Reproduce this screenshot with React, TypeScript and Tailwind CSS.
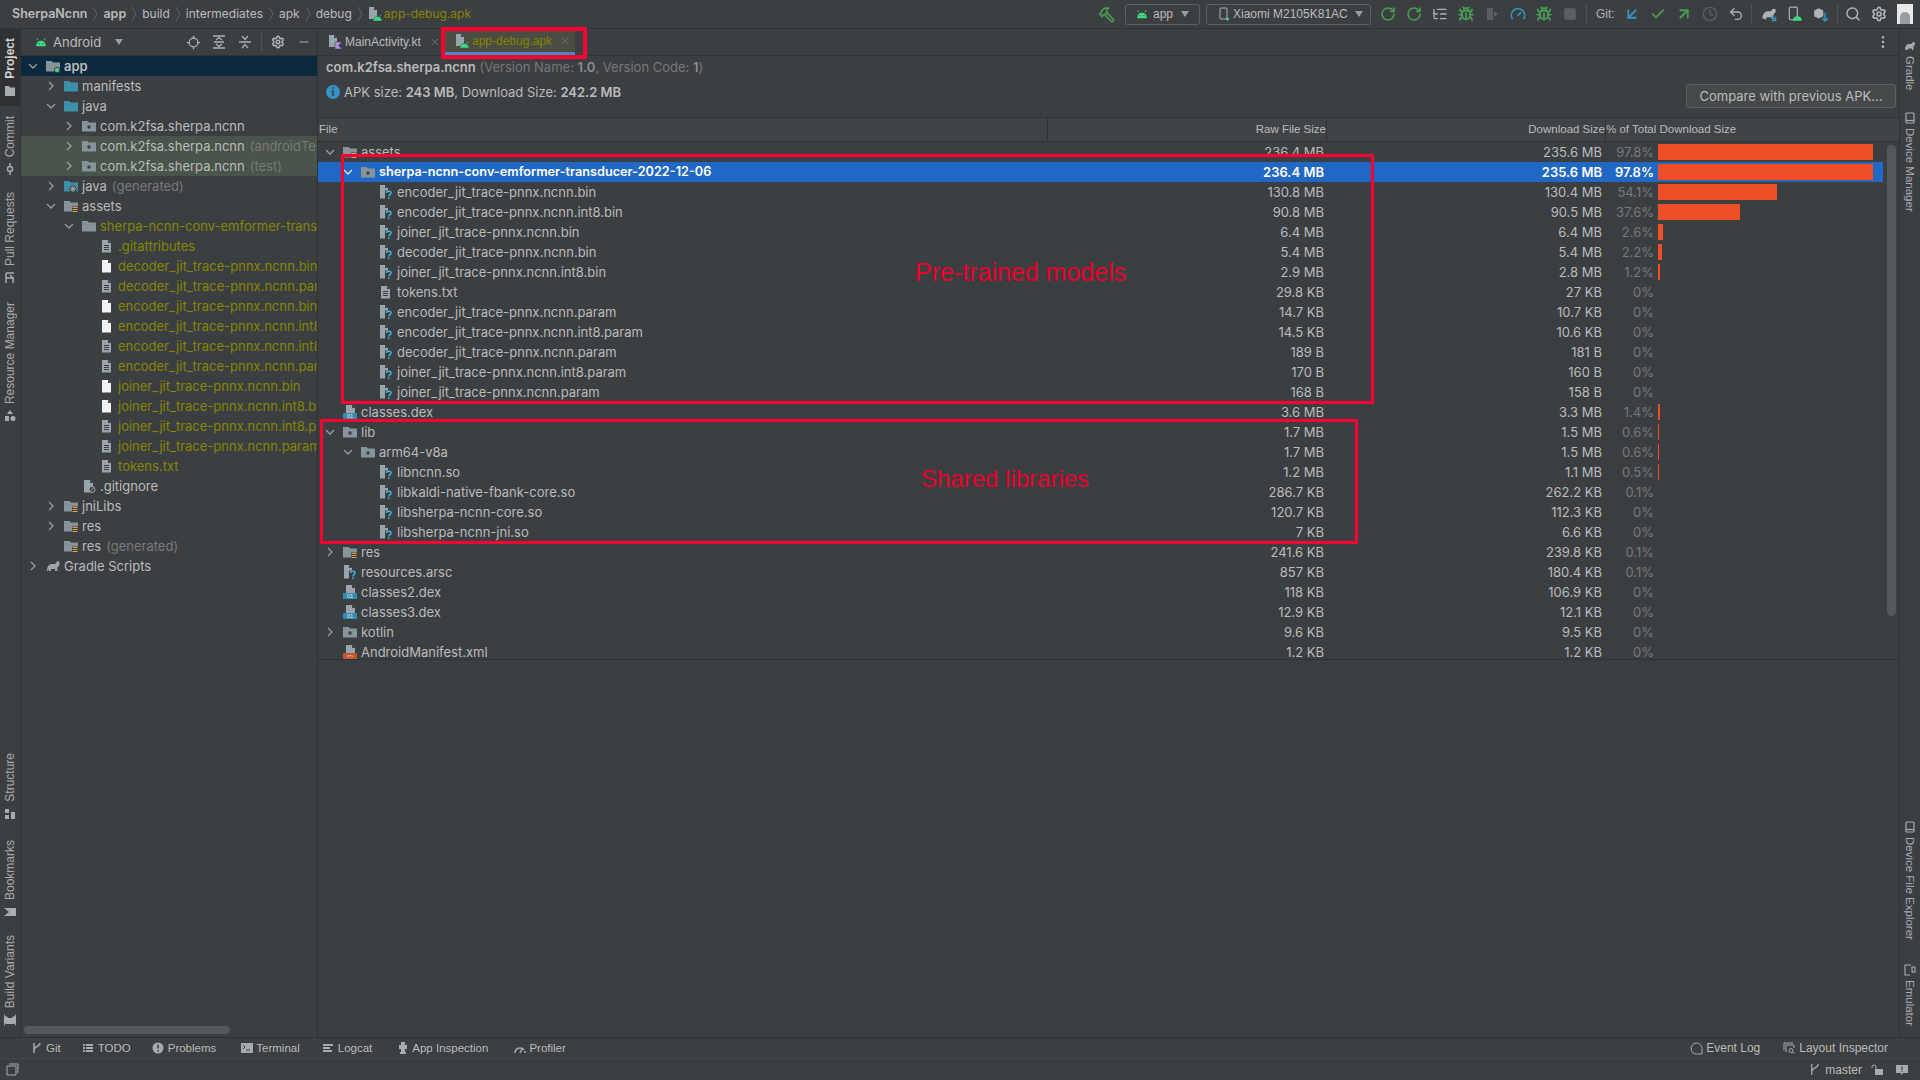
import React from "react"
import {
  ArrowDownLeft,
  ArrowUpRight,
  Bug,
  Check,
  Clock,
  Gauge,
  Hammer,
  ListTree,
  Locate,
  Minus,
  MoreVertical,
  RotateCcw,
  Search,
  Settings,
  Square,
  Undo2,
  X,
} from "lucide-react"

type IconKind =
  | "module" | "source" | "sourceGen" | "package" | "plainFolder" | "resFolder" | "gradle"
  | "textFile" | "binFile" | "ignoreFile" | "unknownFile" | "dexFile" | "xmlFile" | "kotlinFile" | "apkFile"

// depth → left padding, written out so Tailwind sees them
const indent = ["pl-[3px]", "pl-[21px]", "pl-[39px]", "pl-[57px]"]

const Chevron = ({ open, light }: { open?: boolean; light?: boolean }) => (
  <svg viewBox="0 0 12 12" className="w-3 h-3" fill="none" stroke={light ? "#e6e6e6" : "#9a9da0"} strokeWidth="1.3">
    {open ? <path d="M2 4l4 4 4-4" /> : <path d="M4 2l4 4-4 4" />}
  </svg>
)

const Android = ({ className = "w-3.5 h-3.5" }: { className?: string }) => (
  <svg viewBox="0 0 14 14" className={className} fill="#3ddc84">
    <path d="M1.5 11a5.5 5.5 0 0 1 11 0v1h-11z" />
    <path d="M3.5 5L2.2 2.6M10.5 5l1.3-2.4" stroke="#3ddc84" strokeWidth="1" />
    <circle cx="4.8" cy="9" r=".7" fill="#3c3f41" />
    <circle cx="9.2" cy="9" r=".7" fill="#3c3f41" />
  </svg>
)

const Doc = ({ fill = "#9aa4ab", lines }: { fill?: string; lines?: boolean }) => (
  <>
    <path d="M2 1h6l3 3v9.5H2z" fill={fill} />
    <path d="M8 1v3h3z" fill="#3c3f41" />
    {lines && <path d="M4 6.5h5M4 8.5h5M4 10.5h5" stroke="#3c3f41" strokeWidth="1" />}
  </>
)

function Icon({ kind }: { kind: IconKind }) {
  const folder = "M0 2h5.5l1.5 1.6h7V12.5H0z"
  return (
    <svg viewBox="0 0 14 14" className="w-3.5 h-3.5">
      {kind === "module" && (
        <>
          <path d={folder} fill="#87939a" />
          <circle cx="11" cy="11" r="2.6" fill="#3ddc84" stroke="#3c3f41" />
        </>
      )}
      {kind === "source" && <path d={folder} fill="#3d8faa" />}
      {kind === "sourceGen" && (
        <>
          <path d={folder} fill="#3d8faa" />
          <circle cx="9" cy="10" r="3.6" fill="#3c3f41" />
          <path d="M9 7v6M6 10h6M7 8l4 4M11 8l-4 4" stroke="#a9b0b5" strokeWidth="1" />
        </>
      )}
      {kind === "package" && (
        <>
          <path d={folder} fill="#87939a" />
          <circle cx="7" cy="8" r="1.7" fill="#3c3f41" />
        </>
      )}
      {kind === "plainFolder" && <path d={folder} fill="#87939a" />}
      {kind === "resFolder" && (
        <>
          <path d={folder} fill="#87939a" />
          <path d="M8 7.5h6V14H8z" fill="#3c3f41" />
          <path d="M8.5 8.5h5M8.5 10.5h5M8.5 12.5h5" stroke="#e0a050" strokeWidth="1" />
        </>
      )}
      {kind === "gradle" && (
        <path d="M1 12c0-5 2-7 5-7h3c1 0 1.500-3 3-3s1.500 2 1.500 3-1 3-2 3v4H9v-2H5v2H3l-.5-2-.5 2z" fill="#9aa4ab" />
      )}
      {kind === "textFile" && <Doc lines />}
      {kind === "binFile" && <Doc fill="#f2f2f2" />}
      {kind === "ignoreFile" && (
        <>
          <Doc />
          <circle cx="10" cy="10.500" r="3" fill="#3c3f41" stroke="#9aa4ab" />
          <path d="M8 12.500l4-4" stroke="#9aa4ab" />
        </>
      )}
      {kind === "unknownFile" && (
        <>
          <path d="M1 0h5l3 3v10.500H1z" fill="#9aa4ab" />
          <path d="M6 0v3h3z" fill="#3c3f41" />
          <path d="M6 5.500h8V14H6z" fill="#3c3f41" />
          <path d="M7.500 8c0-2.200 4.500-2.200 4.500 0 0 1.700-2.200 1.500-2.200 3.500" stroke="#3fb3d9" strokeWidth="1.500" fill="none" />
          <path d="M9 12.500h1.600V14H9z" fill="#3fb3d9" />
        </>
      )}
      {(kind === "dexFile" || kind === "xmlFile") && (
        <>
          <path d="M3 0h6l3 3v5H3z" fill="#9aa4ab" />
          <path d="M9 0v3h3z" fill="#3c3f41" />
          <path d="M0 8h14v6H0z" fill={kind === "dexFile" ? "#2f8cb0" : "#c3552d"} />
          <text x="7" y="13" textAnchor="middle" fontSize="5.500" fill="#e4e4e4" className="font-['Liberation_Sans',sans-serif]">
            {kind === "dexFile" ? "01" : "<>"}
          </text>
        </>
      )}
      {kind === "kotlinFile" && (
        <>
          <path d="M1 0h5l3 3v9H1z" fill="#9aa4ab" />
          <path d="M6 0v3h3z" fill="#3c3f41" />
          <path d="M7 7h7l-3.500 3.500L14 14H7z" fill="#b38ae0" stroke="#3c3f41" strokeWidth=".5" />
        </>
      )}
      {kind === "apkFile" && (
        <>
          <path d="M1 0h5l3 3v9H1z" fill="#9aa4ab" />
          <path d="M6 0v3h3z" fill="#3c3f41" />
          <path d="M5 14a4.500 4.500 0 0 1 9 0z" fill="#3ddc84" stroke="#3c3f41" strokeWidth=".5" />
          <path d="M7 9.500L6 8M12 9.500L13 8" stroke="#3ddc84" strokeWidth=".8" />
        </>
      )}
    </svg>
  )
}

interface TreeRow {
  depth: number
  open?: boolean
  leaf?: boolean
  icon: IconKind
  name: string
  hint?: string
  ignored?: boolean
  selected?: boolean
  tested?: boolean
  bold?: boolean
}

const sherpaFiles: [IconKind, string][] = [
  ["textFile", ".gitattributes"],
  ["binFile", "decoder_jit_trace-pnnx.ncnn.bin"],
  ["textFile", "decoder_jit_trace-pnnx.ncnn.param"],
  ["binFile", "encoder_jit_trace-pnnx.ncnn.bin"],
  ["binFile", "encoder_jit_trace-pnnx.ncnn.int8.bin"],
  ["textFile", "encoder_jit_trace-pnnx.ncnn.int8.param"],
  ["textFile", "encoder_jit_trace-pnnx.ncnn.param"],
  ["binFile", "joiner_jit_trace-pnnx.ncnn.bin"],
  ["binFile", "joiner_jit_trace-pnnx.ncnn.int8.bin"],
  ["textFile", "joiner_jit_trace-pnnx.ncnn.int8.param"],
  ["textFile", "joiner_jit_trace-pnnx.ncnn.param"],
  ["textFile", "tokens.txt"],
]

const tree: TreeRow[] = [
  { depth: 0, open: true, icon: "module", name: "app", selected: true, bold: true },
  { depth: 1, icon: "source", name: "manifests" },
  { depth: 1, open: true, icon: "source", name: "java" },
  { depth: 2, icon: "package", name: "com.k2fsa.sherpa.ncnn" },
  { depth: 2, icon: "package", name: "com.k2fsa.sherpa.ncnn", hint: "(androidTest)", tested: true },
  { depth: 2, icon: "package", name: "com.k2fsa.sherpa.ncnn", hint: "(test)", tested: true },
  { depth: 1, icon: "sourceGen", name: "java", hint: "(generated)" },
  { depth: 1, open: true, icon: "resFolder", name: "assets" },
  { depth: 2, open: true, icon: "plainFolder", name: "sherpa-ncnn-conv-emformer-transducer-2022-12-06", ignored: true },
  ...sherpaFiles.map(([icon, name]) => ({ depth: 3, leaf: true, icon, name, ignored: true })),
  { depth: 2, leaf: true, icon: "ignoreFile", name: ".gitignore" },
  { depth: 1, icon: "resFolder", name: "jniLibs" },
  { depth: 1, icon: "resFolder", name: "res" },
  { depth: 1, leaf: true, icon: "resFolder", name: "res", hint: "(generated)" },
  { depth: 0, icon: "gradle", name: "Gradle Scripts" },
]

interface ApkRow {
  depth: number
  open?: boolean
  leaf?: boolean
  icon: IconKind
  name: string
  raw: string
  dl: string
  pct: string
  bar: number
  selected?: boolean
}

const q: IconKind = "unknownFile"

const apk: ApkRow[] = [
  { depth: 0, open: true, icon: "resFolder", name: "assets", raw: "236.4 MB", dl: "235.6 MB", pct: "97.8%", bar: 215 },
  { depth: 1, open: true, icon: "package", name: "sherpa-ncnn-conv-emformer-transducer-2022-12-06", raw: "236.4 MB", dl: "235.6 MB", pct: "97.8%", bar: 215, selected: true },
  { depth: 2, leaf: true, icon: q, name: "encoder_jit_trace-pnnx.ncnn.bin", raw: "130.8 MB", dl: "130.4 MB", pct: "54.1%", bar: 119 },
  { depth: 2, leaf: true, icon: q, name: "encoder_jit_trace-pnnx.ncnn.int8.bin", raw: "90.8 MB", dl: "90.5 MB", pct: "37.6%", bar: 82 },
  { depth: 2, leaf: true, icon: q, name: "joiner_jit_trace-pnnx.ncnn.bin", raw: "6.4 MB", dl: "6.4 MB", pct: "2.6%", bar: 5 },
  { depth: 2, leaf: true, icon: q, name: "decoder_jit_trace-pnnx.ncnn.bin", raw: "5.4 MB", dl: "5.4 MB", pct: "2.2%", bar: 4 },
  { depth: 2, leaf: true, icon: q, name: "joiner_jit_trace-pnnx.ncnn.int8.bin", raw: "2.9 MB", dl: "2.8 MB", pct: "1.2%", bar: 2 },
  { depth: 2, leaf: true, icon: "textFile", name: "tokens.txt", raw: "29.8 KB", dl: "27 KB", pct: "0%", bar: 0 },
  { depth: 2, leaf: true, icon: q, name: "encoder_jit_trace-pnnx.ncnn.param", raw: "14.7 KB", dl: "10.7 KB", pct: "0%", bar: 0 },
  { depth: 2, leaf: true, icon: q, name: "encoder_jit_trace-pnnx.ncnn.int8.param", raw: "14.5 KB", dl: "10.6 KB", pct: "0%", bar: 0 },
  { depth: 2, leaf: true, icon: q, name: "decoder_jit_trace-pnnx.ncnn.param", raw: "189 B", dl: "181 B", pct: "0%", bar: 0 },
  { depth: 2, leaf: true, icon: q, name: "joiner_jit_trace-pnnx.ncnn.int8.param", raw: "170 B", dl: "160 B", pct: "0%", bar: 0 },
  { depth: 2, leaf: true, icon: q, name: "joiner_jit_trace-pnnx.ncnn.param", raw: "168 B", dl: "158 B", pct: "0%", bar: 0 },
  { depth: 0, leaf: true, icon: "dexFile", name: "classes.dex", raw: "3.6 MB", dl: "3.3 MB", pct: "1.4%", bar: 2 },
  { depth: 0, open: true, icon: "package", name: "lib", raw: "1.7 MB", dl: "1.5 MB", pct: "0.6%", bar: 1 },
  { depth: 1, open: true, icon: "package", name: "arm64-v8a", raw: "1.7 MB", dl: "1.5 MB", pct: "0.6%", bar: 1 },
  { depth: 2, leaf: true, icon: q, name: "libncnn.so", raw: "1.2 MB", dl: "1.1 MB", pct: "0.5%", bar: 1 },
  { depth: 2, leaf: true, icon: q, name: "libkaldi-native-fbank-core.so", raw: "286.7 KB", dl: "262.2 KB", pct: "0.1%", bar: 0 },
  { depth: 2, leaf: true, icon: q, name: "libsherpa-ncnn-core.so", raw: "120.7 KB", dl: "112.3 KB", pct: "0%", bar: 0 },
  { depth: 2, leaf: true, icon: q, name: "libsherpa-ncnn-jni.so", raw: "7 KB", dl: "6.6 KB", pct: "0%", bar: 0 },
  { depth: 0, icon: "resFolder", name: "res", raw: "241.6 KB", dl: "239.8 KB", pct: "0.1%", bar: 0 },
  { depth: 0, leaf: true, icon: q, name: "resources.arsc", raw: "857 KB", dl: "180.4 KB", pct: "0.1%", bar: 0 },
  { depth: 0, leaf: true, icon: "dexFile", name: "classes2.dex", raw: "118 KB", dl: "106.9 KB", pct: "0%", bar: 0 },
  { depth: 0, leaf: true, icon: "dexFile", name: "classes3.dex", raw: "12.9 KB", dl: "12.1 KB", pct: "0%", bar: 0 },
  { depth: 0, icon: "package", name: "kotlin", raw: "9.6 KB", dl: "9.5 KB", pct: "0%", bar: 0 },
  { depth: 0, leaf: true, icon: "xmlFile", name: "AndroidManifest.xml", raw: "1.2 KB", dl: "1.2 KB", pct: "0%", bar: 0 },
]

const Crumb = ({ children, bold }: { children: React.ReactNode; bold?: boolean }) => (
  <>
    <span className={bold ? "text-[12.5px] font-semibold text-[#bbbbbb]" : "text-[12px] text-[#bbbbbb]"}>{children}</span>
    <svg viewBox="0 0 6 16" className="w-[6px] h-4 mx-[5px]" fill="none" stroke="#616466">
      <path d="M1 1l4 7-4 7" />
    </svg>
  </>
)

const Tool = ({ children }: { children: React.ReactNode }) => (
  <div className="w-[26px] h-5 flex items-center justify-center">{children}</div>
)

const Caret = () => <div className="w-0 h-0 border-x-[4px] border-x-transparent border-t-[6px] border-t-[#9a9da0]" />

function StripeItem({ label, icon, right, active, className = "" }: { label: string; icon: React.ReactNode; right?: boolean; active?: boolean; className?: string }) {
  return (
    <div className={`flex items-center w-5 ${right ? "flex-col gap-[4px]" : "flex-col-reverse gap-[6px]"} ${className}`}>
      <div className="w-3 h-3 flex items-center justify-center text-[#a8abad]">{icon}</div>
      <span
        className={`[writing-mode:vertical-rl] whitespace-nowrap leading-5 ${right ? "text-[11.5px] text-[#a8abad]" : "text-[12px] rotate-180"} ${active ? "font-bold text-[#d4d4d4]" : "text-[#a8abad]"}`}
      >
        {label}
      </span>
    </div>
  )
}

const g = "#a8abad"
const StripeIcons = {
  folder: <svg viewBox="0 0 12 12" className="w-3 h-3" fill={g}><path d="M1 1h4l1 1.500h5V11H1z" /></svg>,
  commit: <svg viewBox="0 0 12 12" className="w-3 h-3" fill="none" stroke={g} strokeWidth="1.500"><circle cx="6" cy="6" r="2.500" /><path d="M6 0v3.500M6 8.500V12" /></svg>,
  pull: <svg viewBox="0 0 12 12" className="w-3 h-3" fill="none" stroke={g} strokeWidth="1.500"><path d="M2 1h8M2 1v10M2 6h7l-3-3M9 6v5" /></svg>,
  shapes: <svg viewBox="0 0 12 12" className="w-3 h-3" fill={g}><path d="M6 0l3 4H3z" /><rect x="1" y="6" width="4" height="5" /><circle cx="9" cy="8.500" r="2.500" /></svg>,
  structure: <svg viewBox="0 0 12 12" className="w-3 h-3" fill={g}><rect x="1" y="1" width="4" height="4" /><rect x="1" y="7" width="4" height="4" /><rect x="7" y="4" width="4" height="7" /></svg>,
  bookmark: <svg viewBox="0 0 12 12" className="w-3 h-3" fill={g}><path d="M0 2h12v8H0l5-4z" /></svg>,
  android: <svg viewBox="0 0 12 12" className="w-3 h-3" fill={g}><path d="M2 2v8h8V2L7.500 4h-3z" /><path d="M0 0l2 3v6l-2 3zM12 0l-2 3v6l2 3z" /></svg>,
  gradle: <svg viewBox="0 0 12 12" className="w-3 h-3" fill={g}><path d="M1 10c0-4 2-6 4-6h2c1 0 1-2 2.500-2S11 3 11 4s-1 2-1.500 2v4H8V8.500H4V10H2.500L2 9z" /></svg>,
  device: <svg viewBox="0 0 12 12" className="w-3 h-3" fill="none" stroke={g} strokeWidth="1.200"><rect x="2" y="1" width="8" height="10" rx="1" /><path d="M2 8.500h8" /></svg>,
  emulator: <svg viewBox="0 0 12 12" className="w-3 h-3" fill="none" stroke={g} strokeWidth="1.100"><path d="M7 1H1v10h5" /><rect x="8" y="3" width="3" height="5" /></svg>,
}

function BottomTool({ icon, label, className = "" }: { icon: React.ReactNode; label: string; className?: string }) {
  return (
    <div className={`flex items-center gap-[3px] text-[#bbbbbb] ${className}`}>
      <div className="w-[13px] h-[13px] flex items-center justify-center text-[#a8abad]">{icon}</div>
      <span>{label}</span>
    </div>
  )
}

export default function App() {
  return (
    <div className="relative w-[1920px] h-[1080px] overflow-hidden flex flex-col bg-[#3c3f41] text-[13px] leading-5 text-[#bbbbbb] font-['Inter',sans-serif]">
      {/* nav bar */}
      <div className="h-[29px] shrink-0 flex items-center justify-between border-b border-[#323232] pl-3 pr-[7px]">
        <div className="flex items-center">
          <Crumb bold>SherpaNcnn</Crumb>
          <Crumb bold>app</Crumb>
          <Crumb>build</Crumb>
          <Crumb>intermediates</Crumb>
          <Crumb>apk</Crumb>
          <Crumb>debug</Crumb>
          <div className="mr-[2px]"><Icon kind="apkFile" /></div>
          <span className="text-[12px] text-[#848504]">app-debug.apk</span>
        </div>
        <div className="flex items-center font-['Liberation_Sans',sans-serif]">
          <Hammer className="w-[17px] h-[17px] text-[#499c54] mr-[10px] -scale-x-100" strokeWidth={2.2} />
          <div className="flex items-center gap-[5px] w-[75px] h-[21px] border border-[#5e6060] rounded-[3px] pl-[10px] mr-[6px]">
            <Android className="w-3 h-3" />
            <span className="text-[12px]">app</span>
            <div className="ml-[3px]"><Caret /></div>
          </div>
          <div className="flex items-center gap-[4px] w-[165px] h-[21px] border border-[#5e6060] rounded-[3px] pl-[12px] mr-[4px]">
            <svg viewBox="0 0 10 14" className="w-2.5 h-3.5" fill="none" stroke="#afb1b3"><rect x="1" y="1" width="7" height="11" rx="1" /><circle cx="8.500" cy="12" r="1.500" fill="#3ddc84" stroke="none" /></svg>
            <span className="text-[12px] whitespace-nowrap">Xiaomi M2105K81AC</span>
            <div className="ml-[3px]"><Caret /></div>
          </div>
          <Tool><RotateCcw className="w-4 h-4 text-[#499c54] -scale-x-100" strokeWidth={2.4} /></Tool>
          <Tool><RotateCcw className="w-4 h-4 text-[#499c54] -scale-x-100" strokeWidth={2.4} /></Tool>
          <Tool><ListTree className="w-4 h-4 text-[#afb1b3]" /></Tool>
          <Tool><Bug className="w-4 h-4 text-[#499c54]" strokeWidth={2.6} /></Tool>
          <Tool><svg viewBox="0 0 14 14" className="w-3.5 h-3.5" fill="#5c5f61"><path d="M2 1h6v12H2zM9 4l4 3-4 3z" /></svg></Tool>
          <Tool><Gauge className="w-4 h-4 text-[#3592c4]" strokeWidth={2.4} /></Tool>
          <Tool><Bug className="w-4 h-4 text-[#499c54]" strokeWidth={2.6} /></Tool>
          <Tool><Square className="w-[14px] h-[14px] text-[#5c5f61]" fill="#5c5f61" /></Tool>
          <div className="w-px h-5 bg-[#505355] ml-[3px] mr-[9px]" />
          <span className="text-[12px] text-[#afb1b3] mr-[5px] w-[18px]">Git:</span>
          <Tool><ArrowDownLeft className="w-[18px] h-[18px] text-[#3592c4]" strokeWidth={2.4} /></Tool>
          <Tool><Check className="w-4 h-4 text-[#499c54]" strokeWidth={2.6} /></Tool>
          <Tool><ArrowUpRight className="w-[18px] h-[18px] text-[#499c54]" strokeWidth={2.4} /></Tool>
          <Tool><Clock className="w-4 h-4 text-[#5c5f61]" /></Tool>
          <Tool><Undo2 className="w-4 h-4 text-[#afb1b3]" /></Tool>
          <div className="w-px h-5 bg-[#505355] ml-[2px] mr-[4px]" />
          <Tool><svg viewBox="0 0 12 12" className="w-4 h-4" fill="#afb1b3"><path d="M1 10c0-4 2-6 4-6h2c1 0 1-2 2.500-2S11 3 11 4s-1 2-1.500 2v4H8V8.500H4V10H2.500L2 9z" /><path d="M8 7l3 4M11 8v3H8" stroke="#3592c4" fill="none" /></svg></Tool>
          <Tool><svg viewBox="0 0 14 14" className="w-4 h-4"><rect x="2" y="1" width="7" height="11" rx="1" fill="none" stroke="#afb1b3" /><path d="M5 13a3.500 3.500 0 0 1 8 0z" fill="#3ddc84" /></svg></Tool>
          <Tool><svg viewBox="0 0 14 14" className="w-4 h-4"><path d="M1 4l4-2 4 2v5l-4 2-4-2z" fill="#afb1b3" /><path d="M10.500 6v7M8 10.500l2.500 2.500 2.500-2.500" stroke="#3592c4" fill="none" strokeWidth="1.300" /></svg></Tool>
          <div className="w-px h-5 bg-[#505355] ml-[3px] mr-[2px]" />
          <Tool><Search className="w-4 h-4 text-[#afb1b3]" strokeWidth={2.2} /></Tool>
          <Tool><Settings className="w-4 h-4 text-[#afb1b3]" strokeWidth={2.6} /></Tool>
          <div className="w-4 h-5 ml-[5px] bg-[#e8e8e8] flex items-end justify-center overflow-hidden">
            <div className="w-2.5 h-3 bg-[#9a9da0] rounded-t-full" />
          </div>
        </div>
      </div>

      <div className="flex-1 flex min-h-0">
        {/* left stripe */}
        <div className="w-[21px] shrink-0 flex flex-col justify-between border-r border-[#323232] pb-[11px] font-['Liberation_Sans',sans-serif]">
          <div className="flex flex-col">
            <StripeItem label="Project" icon={StripeIcons.folder} active className="py-[9px] bg-[#2f3133]" />
            <StripeItem label="Commit" icon={StripeIcons.commit} className="mt-[10px]" />
            <StripeItem label="Pull Requests" icon={StripeIcons.pull} className="mt-[17px]" />
            <StripeItem label="Resource Manager" icon={StripeIcons.shapes} className="mt-[18px]" />
          </div>
          <div className="flex flex-col">
            <StripeItem label="Structure" icon={StripeIcons.structure} />
            <StripeItem label="Bookmarks" icon={StripeIcons.bookmark} className="mt-[20px]" />
            <StripeItem label="Build Variants" icon={StripeIcons.android} className="mt-[17px]" />
          </div>
        </div>

        {/* project panel */}
        <div className="w-[297px] shrink-0 flex flex-col border-r border-[#323232]">
          <div className="h-[27px] shrink-0 flex items-center border-b border-[#323232] pl-[14px]">
            <Android className="w-3 h-3 mr-[6px]" />
            <span className="w-[62px]">Android</span>
            <Caret />
            <div className="flex items-center ml-[57px] text-[#afb1b3]">
              <Tool><Locate className="w-[15px] h-[15px]" /></Tool>
              <Tool><svg viewBox="0 0 14 14" className="w-3.5 h-3.5" fill="none" stroke="currentColor" strokeWidth="1.300"><path d="M1 1h12M1 13h12M4 5l3-2.500L10 5M4 9l3 2.500L10 9M2 7h10" /></svg></Tool>
              <Tool><svg viewBox="0 0 14 14" className="w-3.5 h-3.5" fill="none" stroke="currentColor" strokeWidth="1.300"><path d="M1 7h12M4 1l3 3.500L10 1M4 13l3-3.500 3 3.500" /></svg></Tool>
              <div className="w-px h-5 bg-[#505355] mx-[3px]" />
              <Tool><Settings className="w-3.5 h-3.5" strokeWidth={2.6} /></Tool>
              <Tool><Minus className="w-3.5 h-3.5" strokeWidth={1.6} /></Tool>
            </div>
          </div>
          <div className="flex-1 min-h-0 overflow-hidden">
            {tree.map((r, i) => (
              <div
                key={i}
                className={`h-5 flex items-center whitespace-nowrap overflow-hidden ${indent[r.depth]} ${r.selected ? "bg-[#0d293e]" : r.tested ? "bg-[#49544a]" : ""}`}
              >
                <div className="w-[18px] shrink-0 flex justify-center">{!r.leaf && <Chevron open={r.open} />}</div>
                <div className="w-[22px] shrink-0 pl-1"><Icon kind={r.icon} /></div>
                <span className={r.ignored ? "text-[#848504]" : r.bold ? "font-semibold" : ""}>{r.name}</span>
                {r.hint && <span className="ml-[5px] text-[#787878]">{r.hint}</span>}
              </div>
            ))}
          </div>
          <div className="h-[14px] shrink-0 flex items-center pl-[3px]">
            <div className="w-[206px] h-2 rounded-full bg-[#55585a]" />
          </div>
        </div>

        {/* editor */}
        <div className="flex-1 min-w-0 flex flex-col border-r border-[#323232]">
          <div className="h-[27px] shrink-0 flex items-stretch border-b border-[#323232] pr-[8px] font-['Liberation_Sans',sans-serif]">
            <div className="w-[125px] flex items-center pl-[10px]">
              <Icon kind="kotlinFile" />
              <span className="ml-[3px] text-[12px]">MainActivity.kt</span>
              <X className="w-3 h-3 ml-[8px] text-[#6b6e70]" />
            </div>
            <div className="w-[132px] flex items-center pl-[12px] bg-[#4b4c42] border-b-[3px] border-[#4a88c7]">
              <Icon kind="apkFile" />
              <span className="ml-[3px] text-[12px] text-[#848504]">app-debug.apk</span>
              <X className="w-3 h-3 ml-[7px] text-[#6b6e70]" />
            </div>
            <div className="ml-auto flex items-center">
              <MoreVertical className="w-4 h-4 text-[#afb1b3]" />
            </div>
          </div>

          <div className="h-[61px] shrink-0 flex justify-between pl-[8px] pr-[3px] pb-[9px]">
            <div className="pt-[1px]">
              <div className="h-[20px]">
                <span className="font-semibold">com.k2fsa.sherpa.ncnn</span>
                <span className="text-[#787878]"> (Version Name: </span>
                <span className="font-semibold text-[#8c8c8c]">1.0</span>
                <span className="text-[#787878]">, Version Code: </span>
                <span className="font-semibold text-[#8c8c8c]">1</span>
                <span className="text-[#787878]">)</span>
              </div>
              <div className="flex items-center mt-[5px]">
                <div className="w-3.5 h-3.5 rounded-full bg-[#3592c4] text-[#3c3f41] text-[11px] leading-[14px] text-center font-bold mr-[4px]">i</div>
                <span>APK size: <b className="font-semibold">243 MB</b>, Download Size: <b className="font-semibold">242.2 MB</b></span>
              </div>
            </div>
            <button className="self-end w-[210px] h-6 rounded-[3px] border border-[#5e6060] bg-[#45494a] text-[#bbbbbb]">
              Compare with previous APK...
            </button>
          </div>

          <div className="h-[543px] shrink-0 flex flex-col border-y border-[#323232] overflow-hidden">
            <div className="h-[24px] shrink-0 flex items-stretch bg-[#414446] border-b border-[#323232] text-[11.5px] font-['Liberation_Sans',sans-serif]">
              <div className="w-[730px] flex items-center pl-px pb-[2px] border-r border-[#323232]">File</div>
              <div className="w-[279px] flex items-center justify-end pb-[2px] border-r border-[#323232]">Raw File Size</div>
              <div className="w-[279px] flex items-center justify-end pb-[2px] border-r border-[#323232]">Download Size</div>
              <div className="flex items-center pb-[2px]">% of Total Download Size</div>
            </div>
            <div className="flex-1 min-h-0 flex">
              <div className="w-[1565px] shrink-0">
                {apk.map((r) => (
                  <div key={r.name + r.raw} className={`h-5 flex items-center whitespace-nowrap ${r.selected ? "bg-[#2068c4] text-white font-semibold" : ""}`}>
                    <div className={`w-[731px] flex items-center ${indent[r.depth]}`}>
                      <div className="w-[18px] shrink-0 flex justify-center">{!r.leaf && <Chevron open={r.open} light={r.selected} />}</div>
                      <div className="w-[22px] shrink-0 pl-1"><Icon kind={r.icon} /></div>
                      <span className={r.selected ? "text-[12.7px]" : ""}>{r.name}</span>
                    </div>
                    <div className="w-[278px] text-right pr-[3px]">{r.raw}</div>
                    <div className="w-[278px] text-right pr-[3px]">{r.dl}</div>
                    <div className={`w-[50px] text-right pr-px ${r.selected ? "" : "text-[#787878]"}`}>{r.pct}</div>
                    <div className="flex-1 pl-[3px]">
                      <div className="h-4 bg-[#ef4e26]" style={{ width: r.bar }} />
                    </div>
                  </div>
                ))}
              </div>
              <div className="flex-1 flex justify-center pt-[3px]">
                <div className="w-[9px] h-[471px] rounded-full bg-[#55585a]" />
              </div>
            </div>
          </div>
        </div>

        {/* right stripe */}
        <div className="w-5 shrink-0 flex flex-col justify-between pt-[11px] pb-[11px] font-['Liberation_Sans',sans-serif]">
          <div className="flex flex-col">
            <StripeItem right label="Gradle" icon={StripeIcons.gradle} />
            <StripeItem right label="Device Manager" icon={StripeIcons.device} className="mt-[21px]" />
          </div>
          <div className="flex flex-col">
            <StripeItem right label="Device File Explorer" icon={StripeIcons.device} />
            <StripeItem right label="Emulator" icon={StripeIcons.emulator} className="mt-[24px]" />
          </div>
        </div>
      </div>

      {/* tool window bar */}
      <div className="h-[22px] shrink-0 flex items-center justify-between border-y border-t-[#323232] border-b-[#45484a] text-[11.5px] pl-[30px] pr-[32px] font-['Liberation_Sans',sans-serif]">
        <div className="flex items-center">
          <BottomTool label="Git" icon={<svg viewBox="0 0 12 12" className="w-3 h-3" fill="none" stroke="currentColor" strokeWidth="1.500"><path d="M3 1v10M9 1c0 4-6 3-6 7" /></svg>} />
          <BottomTool label="TODO" className="ml-[21px]" icon={<svg viewBox="0 0 12 12" className="w-3 h-3" fill="currentColor"><path d="M1 2h2v2H1zM4 2h7v2H4zM1 5h2v2H1zM4 5h7v2H4zM1 8h2v2H1zM4 8h7v2H4z" /></svg>} />
          <BottomTool label="Problems" className="ml-[21px]" icon={<svg viewBox="0 0 12 12" className="w-3 h-3"><circle cx="6" cy="6" r="5.500" fill="currentColor" /><path d="M6 2.500v4M6 8v1.500" stroke="#3c3f41" strokeWidth="1.500" /></svg>} />
          <BottomTool label="Terminal" className="ml-[24px]" icon={<svg viewBox="0 0 12 12" className="w-3 h-3"><path d="M0 1h12v10H0z" fill="currentColor" /><path d="M2 3l2 2-2 2M5 8h4" stroke="#3c3f41" fill="none" /></svg>} />
          <BottomTool label="Logcat" className="ml-[22px]" icon={<svg viewBox="0 0 12 12" className="w-3 h-3" fill="currentColor"><path d="M1 2h10v2H1zM1 5h7v2H1zM1 8h9v2H1z" /></svg>} />
          <BottomTool label="App Inspection" className="ml-[24px]" icon={<svg viewBox="0 0 12 12" className="w-3 h-3" fill="currentColor"><path d="M4 0h4v3h2v4H8v3h1v2H3v-2h1V7H2V3h2z" /></svg>} />
          <BottomTool label="Profiler" className="ml-[25px]" icon={<svg viewBox="0 0 12 12" className="w-3 h-3" fill="none" stroke="currentColor" strokeWidth="1.500"><path d="M1 11a5 5 0 0 1 9-3M11 11V9M6 11l2-4" /></svg>} />
        </div>
        <div className="flex items-center gap-[23px] text-[12px]">
          <BottomTool label="Event Log" icon={<svg viewBox="0 0 13 13" className="w-[13px] h-[13px]" fill="none" stroke="currentColor"><path d="M6.500 1a5.500 5.500 0 0 0-5 7.500c.5 2 2 3.500 5 3.500h5.500V6.500A5.500 5.500 0 0 0 6.500 1z" /></svg>} />
          <BottomTool label="Layout Inspector" icon={<svg viewBox="0 0 13 13" className="w-[13px] h-[13px]" fill="none" stroke="currentColor"><path d="M1 8V1h9M3 10V3h8v3" /><circle cx="8" cy="8.500" r="2" /><path d="M9.500 10l2 2" /></svg>} />
        </div>
      </div>

      {/* status bar */}
      <div className="h-[21px] shrink-0 flex items-center justify-between text-[12px] pl-[6px] pr-[12px] font-['Liberation_Sans',sans-serif]">
        <svg viewBox="0 0 13 13" className="w-[13px] h-[13px]" fill="none" stroke="#a8abad"><path d="M3 1h9v9M1 3h9v9H1z" /></svg>
        <div className="flex items-center">
          <svg viewBox="0 0 12 14" className="w-[11px] h-[13px] mr-[5px]" fill="none" stroke="#a8abad" strokeWidth="1.400"><path d="M3 1v12M10 1c0 5-7 4-7 8" /></svg>
          <span>master</span>
          <svg viewBox="0 0 12 12" className="w-3 h-3 ml-[9px]"><path d="M1 4V3a2 2 0 0 1 4 0v2" fill="none" stroke="#a8abad" /><rect x="4" y="5" width="8" height="6" fill="#a8abad" /></svg>
          <svg viewBox="0 0 12 12" className="w-3 h-3 ml-[13px]"><path d="M0 1h12v8H7l-2 2V9H0z" fill="#a8abad" /><path d="M6 2.500v3.500M6 7v1" stroke="#3c3f41" strokeWidth="1.200" /></svg>
        </div>
      </div>

      {/* red annotations drawn over the screenshot */}
      <div className="absolute left-[441px] top-[27px] w-[146px] h-[32px] border-4 border-[#fb0030] rounded-[1px]" />
      <div className="absolute left-[341px] top-[154px] w-[1033px] h-[250px] border-[3px] border-[#fb0030] rounded-[1px]" />
      <div className="absolute left-[320px] top-[419px] w-[1038px] h-[125px] border-[3px] border-[#fb0030] rounded-[1px]" />
      <div className="absolute left-[915px] top-[257px] text-[25px] leading-[30px] text-[#e8002c] whitespace-nowrap font-['Liberation_Sans',sans-serif]">Pre-trained models</div>
      <div className="absolute left-[921px] top-[464px] text-[24px] leading-[30px] text-[#e8002c] whitespace-nowrap font-['Liberation_Sans',sans-serif]">Shared libraries</div>
    </div>
  )
}
